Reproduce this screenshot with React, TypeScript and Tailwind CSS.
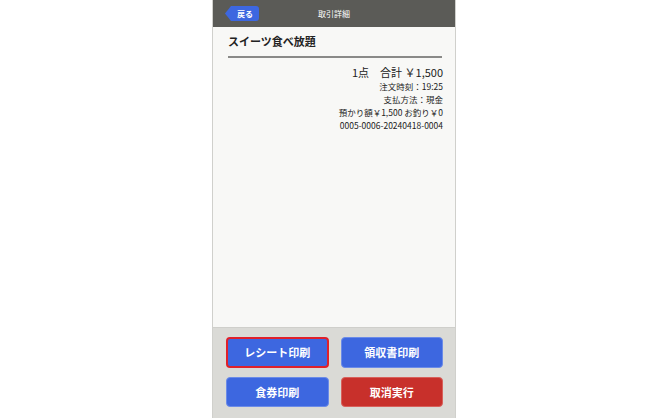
import React from "react";

const font = { fontFamily: '"Noto Sans CJK JP", "Noto Sans", sans-serif' };

export default function App() {
  return (
    <div className="w-[670px] h-[418px] bg-white overflow-hidden" style={font}>
      <div className="ml-[212px] w-[244px] h-[418px] flex flex-col border-x border-[#d0d0cc]">
        {/* ヘッダー */}
        <div className="relative h-[27px] bg-[#5b5b57] flex items-center justify-center shrink-0">
          <div className="absolute left-[12px] top-[6px] h-[15px] w-[34px] flex items-center">
            <svg width="6" height="15" viewBox="0 0 6 15" className="shrink-0">
              <path d="M6 0 L0 7.5 L6 15 Z" fill="#3d67e0" />
            </svg>
            <div className="h-[15px] flex-1 bg-[#3d67e0] rounded-r-[3px] flex items-center justify-center text-white text-[8px] font-bold leading-none">
              戻る
            </div>
          </div>
          <span className="text-white text-[8px] leading-none">取引詳細</span>
        </div>

        {/* 内容 */}
        <div className="flex-1 bg-[#f8f8f6] pl-[15px] pr-[12px] pt-[7px]">
          <div className="text-[11px] font-bold text-[#222] leading-[14px] pb-[8px] border-b-2 border-[#8a8a88] mr-[1px]">
            スイーツ食べ放題
          </div>
          <div className="flex flex-col items-end text-[#222] mt-[7px]">
            <div className="text-[11px] leading-[14px] mb-[1px]">1点　合計 ￥1,500</div>
            <div className="text-[8.5px] leading-[13px]">注文時刻：19:25</div>
            <div className="text-[8.5px] leading-[13px]">支払方法：現金</div>
            <div className="text-[8.5px] leading-[13px]">預かり額￥1,500 お釣り￥0</div>
            <div className="text-[8.5px] leading-[13px]">0005-0006-20240418-0004</div>
          </div>
        </div>

        {/* ボタン */}
        <div className="h-[91px] shrink-0 bg-[#dadad6] border-t border-[#cfcfcb] pl-[13px] pr-[12px] pt-[9px]">
          <div className="grid grid-cols-2 gap-x-[12px] gap-y-[9px]">
            <button className="h-[31px] rounded-[4px] bg-[#3d67e0] border-2 border-[#e0202a] text-white text-[11px] font-bold">
              レシート印刷
            </button>
            <button className="h-[31px] rounded-[4px] bg-[#3d67e0] border border-[#6b8be8] text-white text-[11px] font-bold">
              領収書印刷
            </button>
            <button className="h-[30px] rounded-[4px] bg-[#3d67e0] border border-[#6b8be8] text-white text-[11px] font-bold">
              食券印刷
            </button>
            <button className="h-[30px] rounded-[4px] bg-[#c8302b] border border-[#d8605b] text-white text-[11px] font-bold">
              取消実行
            </button>
          </div>
        </div>
      </div>
    </div>
  );
}
